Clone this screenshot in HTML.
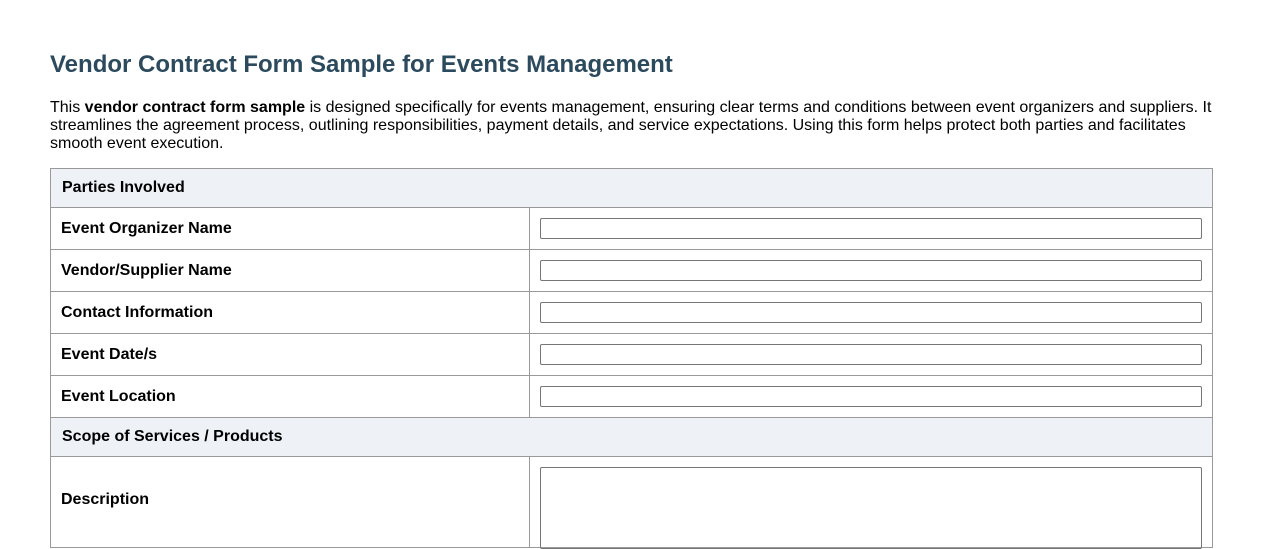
<!DOCTYPE html>
<html><head><style>
html,body{margin:0;background:#fff;font-family:"Liberation Sans",Arial,sans-serif;color:#000;overflow:hidden;height:530px;}
h1{position:absolute;left:50px;top:50px;margin:0;font-size:24px;font-weight:bold;color:#2c4a5e;line-height:30px;}
p{position:absolute;left:50px;top:99px;width:1170px;margin:0;font-size:16px;line-height:18px;}
.t{position:absolute;left:50px;top:168px;width:1161px;border:1px solid #999;border-bottom:none;}
.h{height:38px;background:#eef2f7;border-bottom:1px solid #999;font-weight:bold;font-size:16px;line-height:38px;padding-left:11px;}
.r{height:41px;border-bottom:1px solid #999;display:flex;}
.l{width:468px;border-right:1px solid #999;font-weight:bold;font-size:16px;line-height:41px;padding-left:10px;}
.i{margin:10px 0 0 10px;width:660px;height:19px;border:1px solid #767676;border-radius:2px;}
.d{height:90px}
.d .l{line-height:86px}
.d .i{height:80px}
</style></head><body>
<h1>Vendor Contract Form Sample for Events Management</h1>
<p>This <b>vendor contract form sample</b> is designed specifically for events management, ensuring clear terms and conditions between event organizers and suppliers. It streamlines the agreement process, outlining responsibilities, payment details, and service expectations. Using this form helps protect both parties and facilitates smooth event execution.</p>
<div class="t">
<div class="h">Parties Involved</div>
<div class="r"><div class="l">Event Organizer Name</div><div class="i"></div></div>
<div class="r"><div class="l">Vendor/Supplier Name</div><div class="i"></div></div>
<div class="r"><div class="l">Contact Information</div><div class="i"></div></div>
<div class="r"><div class="l">Event Date/s</div><div class="i"></div></div>
<div class="r"><div class="l">Event Location</div><div class="i"></div></div>
<div class="h">Scope of Services / Products</div>
<div class="r d"><div class="l">Description</div><div class="i"></div></div>
</div>
</body></html>
